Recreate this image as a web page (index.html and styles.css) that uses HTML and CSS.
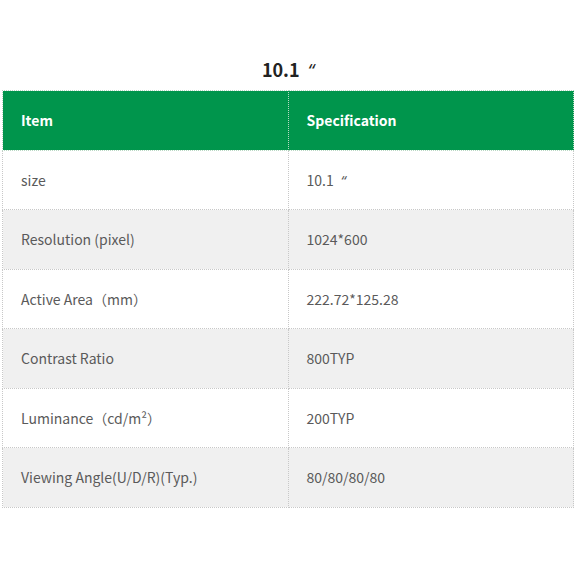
FILE: index.html
```html
<!DOCTYPE html>
<html>
<head>
<meta charset="utf-8">
<link rel="stylesheet" href="styles.css">
</head>
<body>
<div class="page">
  <h2 class="title">10.1 <span class="q">“</span></h2>
  <table class="spec">
    <thead>
      <tr><th>Item</th><th>Specification</th></tr>
    </thead>
    <tbody>
      <tr><td>size</td><td>10.1 <span class="q">“</span></td></tr>
      <tr class="alt"><td>Resolution (pixel)</td><td>1024*600</td></tr>
      <tr><td>Active Area（mm）</td><td>222.72*125.28</td></tr>
      <tr class="alt"><td>Contrast Ratio</td><td>800TYP</td></tr>
      <tr><td>Luminance（cd/m²）</td><td>200TYP</td></tr>
      <tr class="alt"><td>Viewing Angle(U/D/R)(Typ.)</td><td>80/80/80/80</td></tr>
    </tbody>
  </table>
</div>
</body>
</html>
```
FILE: styles.css
```css
html, body {
  margin: 0;
  padding: 0;
  background: #fff;
}
body {
  font-family: "Noto Sans CJK SC", "Noto Sans", sans-serif;
  color: #5a5a5a;
}
.page {
  padding: 58px 3px 0 2px;
}
.title {
  margin: 0 0 9px;
  height: 23px;
  line-height: 23px;
  font-size: 18px;
  font-weight: bold;
  color: #222;
  text-align: center;
}
.q {
  font-family: "Noto Sans", sans-serif;
  font-style: italic;
  font-weight: normal;
  margin-left: 4px;
}
.spec {
  width: 572px;
  border-collapse: collapse;
  table-layout: fixed;
  font-size: 14px;
}
.spec th, .spec td {
  border: 1px dotted #c8c8c8;
  height: 58.5px;
  padding: 0 0 0 18px;
  text-align: left;
  vertical-align: middle;
}
.spec th {
  background: #00954c;
  color: #fff;
  font-weight: bold;
  border-color: #b9d9c4;
}
.spec tr.alt td {
  background: #f0f0f0;
}
```
